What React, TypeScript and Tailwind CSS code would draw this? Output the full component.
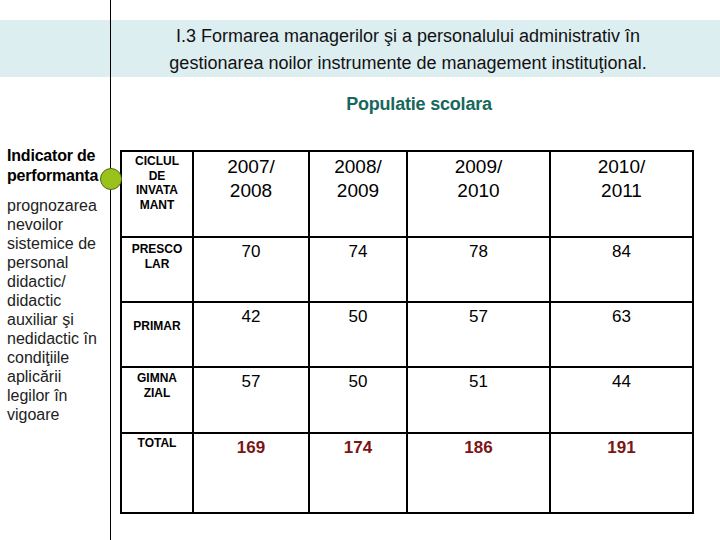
const years = ["2007/ 2008", "2008/ 2009", "2009/ 2010", "2010/ 2011"]

const rows = [
  { label: ["PRESCO", "LAR"], values: [70, 74, 78, 84], h: "h-[65px]", pad: "pt-[4px]", total: false },
  { label: ["PRIMAR"], values: [42, 50, 57, 63], h: "h-[65px]", pad: "pt-[16px]", total: false },
  { label: ["GIMNA", "ZIAL"], values: [57, 50, 51, 44], h: "h-[66px]", pad: "pt-[3px]", total: false },
  { label: ["TOTAL"], values: [169, 174, 186, 191], h: "h-[80px]", pad: "pt-[2px]", total: true },
]

const colW = ["w-[72px]", "w-[116px]", "w-[98px]", "w-[143px]", "w-[143px]"]

export default function App() {
  return (
    <div className="relative w-[720px] h-[540px] bg-white overflow-hidden font-['Liberation_Sans',Arial,sans-serif] text-black">
      {/* vertical rule */}
      <div className="absolute left-[110px] top-0 h-full w-px bg-black z-10" />
      <div className="absolute left-[100px] top-[168px] w-[22px] h-[22px] rounded-full bg-[#99c31c] border-[1.5px] border-[#4f6c0c] z-20" />

      <div className="pt-[20px]">
        <div className="h-[57px] bg-[#ddeef1] pl-[110px] pt-[3px] text-center text-[18px] leading-[27px] text-[#111]">
          <div className="pr-[14px]">I.3 Formarea managerilor şi a personalului administrativ în</div>
          <div className="pr-[14px]">gestionarea noilor instrumente de management instituţional.</div>
        </div>
      </div>

      <div className="pl-[118px] pt-[16px] h-[73px] text-center">
        <span className="text-[18px] font-bold text-[#17675c] leading-[20px] tracking-[-0.2px]">Populatie scolara</span>
      </div>

      <div className="flex">
        <div className="w-[110px] pl-[7px] -mt-[4px]">
          <div className="text-[16px] font-bold leading-[20px] tracking-[-0.2px]">
            Indicator de<br />performanta
          </div>
          <div className="mt-[10px] text-[16px] leading-[19px] text-[#222]">
            prognozarea<br />nevoilor<br />sistemice de<br />personal<br />didactic/<br />didactic<br />auxiliar şi<br />nedidactic în<br />condiţiile<br />aplicării<br />legilor în<br />vigoare
          </div>
        </div>

        <table className="ml-[10px] border-collapse border-2 border-black table-fixed">
          <tbody>
            <tr className="h-[86px]">
              <td className={`${colW[0]} border-2 border-black align-top text-center pt-[2px] text-[12px] font-bold leading-[14.5px]`}>
                CICLUL<br />DE<br />INVATA<br />MANT
              </td>
              {years.map((y, i) => (
                <td key={y} className={`${colW[i + 1]} border-2 border-black align-top text-center pt-[3px] text-[19px] leading-[24px]`}>
                  {y.split(" ")[0]}<br />{y.split(" ")[1]}
                </td>
              ))}
            </tr>
            {rows.map((r) => (
              <tr key={r.label.join("")} className={r.h}>
                <td className={`border-2 border-black align-top text-center ${r.pad} text-[12px] font-bold leading-[14.5px]`}>
                  {r.label.map((l, i) => (
                    <div key={i}>{l}</div>
                  ))}
                </td>
                {r.values.map((v, i) => (
                  <td
                    key={i}
                    className={`border-2 border-black align-top text-center pt-[4px] text-[17px] leading-[20px] ${r.total ? "font-bold text-[#7b1416]" : ""}`}
                  >
                    {v}
                  </td>
                ))}
              </tr>
            ))}
          </tbody>
        </table>
      </div>
    </div>
  )
}
